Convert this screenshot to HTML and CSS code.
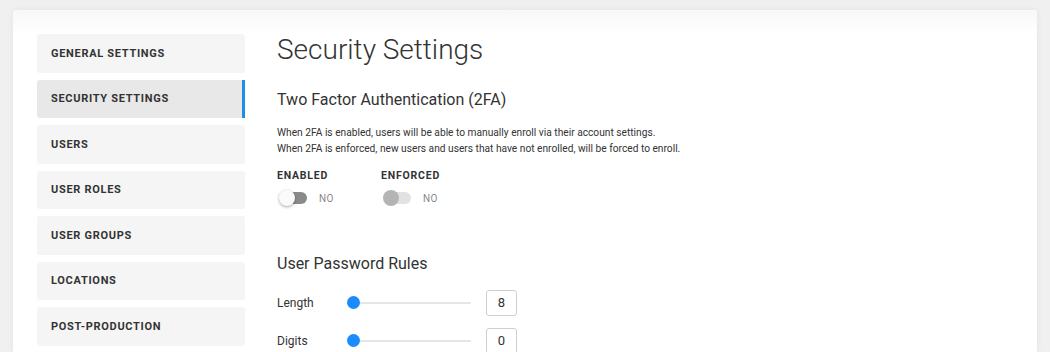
FILE: index.html
```html
<!DOCTYPE html>
<html>
<head>
  <title>Settings - Security</title>
  <meta charset="UTF-8" />
  <link rel="stylesheet" href="styles.css">
</head>
<body>
  <div class="settings-card">
    <!-- Settings navigation -->
    <nav class="side-nav">
      <a class="nav-item" href="#">General Settings</a>
      <a class="nav-item active" href="#">Security Settings</a>
      <a class="nav-item" href="#">Users</a>
      <a class="nav-item" href="#">User Roles</a>
      <a class="nav-item" href="#">User Groups</a>
      <a class="nav-item" href="#">Locations</a>
      <a class="nav-item" href="#">Post-Production</a>
    </nav>

    <main class="content">
      <h1>Security Settings</h1>

      <!-- 2FA -->
      <section class="section-2fa">
        <h2>Two Factor Authentication (2FA)</h2>
        <p class="help-text">
          When 2FA is enabled, users will be able to manually enroll via their account settings.<br>
          When 2FA is enforced, new users and users that have not enrolled, will be forced to enroll.
        </p>
        <div class="toggles">
          <div class="toggle-field">
            <div class="field-label">Enabled</div>
            <div class="toggle-row">
              <span class="switch"><span class="knob"></span></span>
              <span class="switch-text">No</span>
            </div>
          </div>
          <div class="toggle-field">
            <div class="field-label">Enforced</div>
            <div class="toggle-row">
              <span class="switch disabled"><span class="knob"></span></span>
              <span class="switch-text">No</span>
            </div>
          </div>
        </div>
      </section>

      <!-- Password rules -->
      <section class="section-rules">
        <h2>User Password Rules</h2>
        <div class="rule-row">
          <label>Length</label>
          <div class="slider"><span class="thumb"></span></div>
          <input class="rule-value" type="text" value="8" />
        </div>
        <div class="rule-row">
          <label>Digits</label>
          <div class="slider"><span class="thumb"></span></div>
          <input class="rule-value" type="text" value="0" />
        </div>
      </section>
    </main>
  </div>
</body>
</html>
```

FILE: styles.css
```css
body {
  margin: 0;
  background: #f0f0f0;
  font-family: Roboto, "Liberation Sans", sans-serif;
  color: #333;
  height: 352px;
  overflow: hidden;
}

.settings-card {
  display: flex;
  gap: 32px;
  margin: 10px 13px 0 13px;
  padding: 24px 24px 0 24px;
  height: 342px;
  box-sizing: border-box;
  overflow: hidden;
  background: linear-gradient(180deg, #f8f8f8 0%, #fff 24px);
  box-shadow: 0 0 6px rgba(0, 0, 0, 0.06);
  border-radius: 2px 2px 0 0;
}

/* Sidebar */
.side-nav {
  display: flex;
  flex-direction: column;
  gap: 7px;
  width: 208px;
  flex-shrink: 0;
}

.nav-item {
  display: flex;
  align-items: center;
  flex-shrink: 0;
  height: 38.5px;
  padding-left: 14px;
  background: #f5f5f5;
  border-radius: 3px;
  color: #333;
  text-decoration: none;
  text-transform: uppercase;
  font-size: 11px;
  font-weight: 700;
  letter-spacing: 0.7px;
  box-sizing: border-box;
}

.nav-item.active {
  background: #e8e8e8;
  border-right: 3px solid #1e8fe6;
  border-radius: 3px 0 0 3px;
}

/* Content */
.content {
  flex: 1;
}

h1 {
  margin: 1.5px 0 0 0;
  font-size: 28px;
  line-height: 28px;
  font-weight: 300;
  color: #333;
}

h2 {
  margin: 0;
  font-size: 16px;
  line-height: 20px;
  font-weight: 400;
  color: #333;
}

.section-2fa {
  margin-top: 26px;
}

.help-text {
  margin: 15.5px 0 0 0;
  font-size: 10.2px;
  line-height: 16px;
  color: #333;
}

.toggles {
  display: flex;
  margin-top: 11.5px;
}

.toggle-field {
  width: 104px;
}

.field-label {
  font-size: 10.5px;
  line-height: 14px;
  font-weight: 700;
  letter-spacing: 0.8px;
  text-transform: uppercase;
  color: #333;
}

.toggle-row {
  display: flex;
  align-items: center;
  gap: 12px;
  margin-top: 7.5px;
  height: 16px;
}

.switch {
  position: relative;
  display: block;
  width: 26px;
  height: 12px;
  margin-left: 4px;
  border-radius: 6px;
  background: #8a8a8a;
}

.switch .knob {
  position: absolute;
  left: -2px;
  top: -2px;
  width: 16px;
  height: 16px;
  border-radius: 50%;
  background: #fafafa;
  box-shadow: 0 1px 3px rgba(0, 0, 0, 0.35);
}

.switch.disabled {
  background: #e2e2e2;
}

.switch.disabled .knob {
  background: #b4b4b4;
  box-shadow: none;
}

.switch-text {
  font-size: 10px;
  text-transform: uppercase;
  color: #888;
  letter-spacing: 0.3px;
}

.section-rules {
  margin-top: 47.5px;
}

.rule-row {
  display: flex;
  align-items: center;
  height: 26px;
  margin-top: 12.3px;
}

.section-rules h2 + .rule-row {
  margin-top: 16px;
}

.rule-row label {
  width: 70px;
  font-size: 12px;
  color: #333;
}

.slider {
  position: relative;
  width: 118px;
  height: 2px;
  margin-left: 6px;
  background: #e6e6e6;
  border-radius: 1px;
}

.slider .thumb {
  position: absolute;
  left: -6px;
  top: -6px;
  width: 13px;
  height: 13px;
  border-radius: 50%;
  background: #1a8cff;
}

.rule-value {
  width: 31px;
  height: 26px;
  margin-left: 15px;
  box-sizing: border-box;
  border: 1px solid #cfcfcf;
  border-radius: 3px;
  text-align: center;
  font-family: Roboto, sans-serif;
  font-size: 13px;
  color: #333;
  padding: 0;
}
```
